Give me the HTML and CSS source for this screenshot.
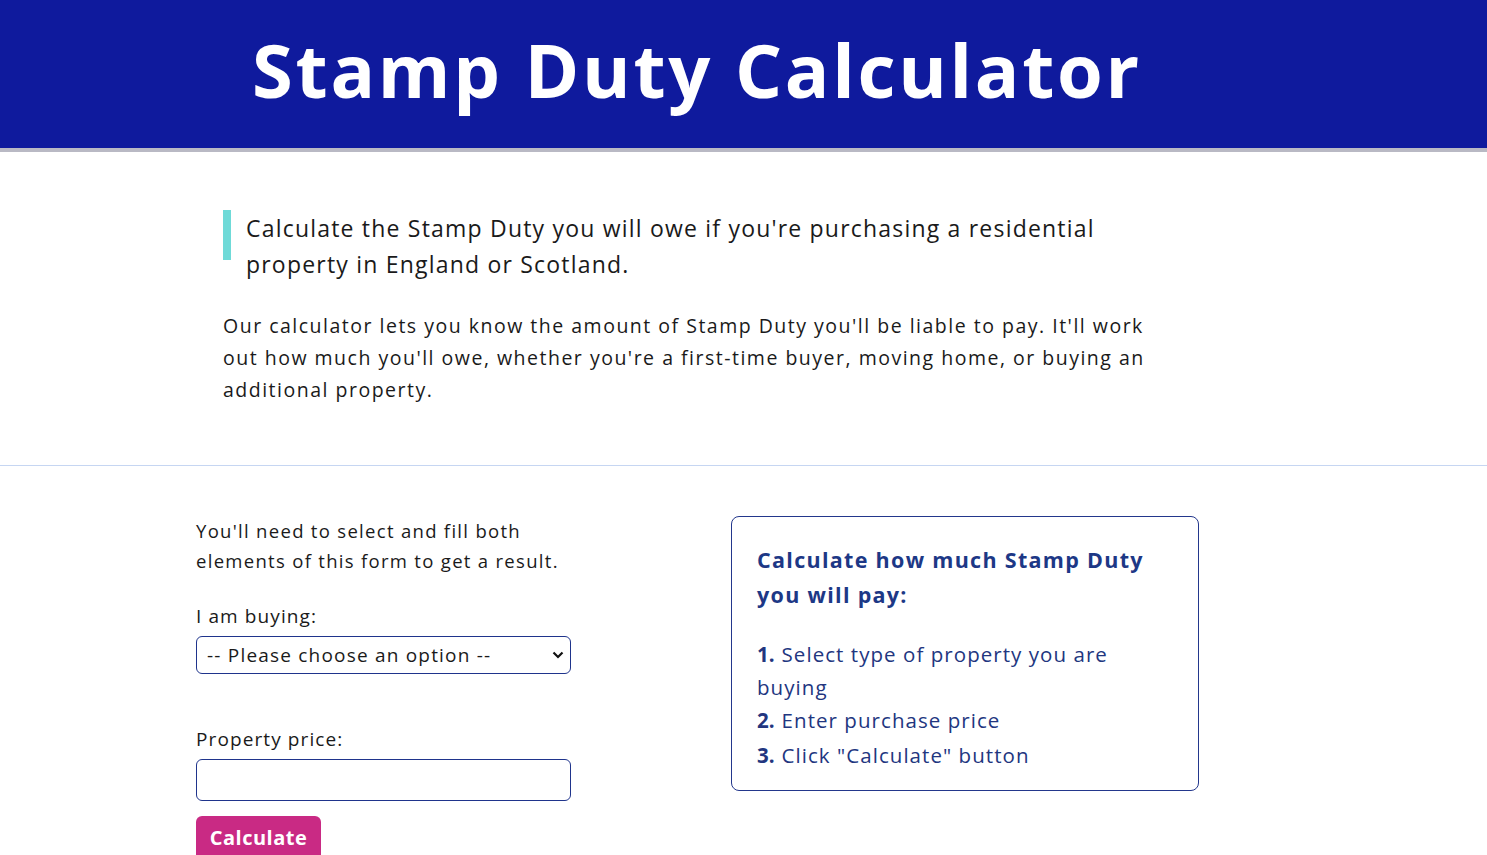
FILE: index.html
```html
<!DOCTYPE html>
<html lang="en">
<head>
<meta charset="utf-8">
<title>Stamp Duty Calculator</title>
<link rel="stylesheet" href="styles.css">
</head>
<body>
<header class="site-header">
  <div class="header-inner">
    <h1 class="title">Stamp Duty Calculator</h1>
  </div>
</header>
<section class="intro">
  <div class="intro-inner">
    <div class="lead">
      <span class="lead-bar"></span>
      <p class="lead-text">Calculate the Stamp Duty you will owe if you're purchasing a residential property in England or Scotland.</p>
    </div>
    <p class="body-text">Our calculator lets you know the amount of Stamp Duty you'll be liable to pay. It'll work out how much you'll owe, whether you're a first-time buyer, moving home, or buying an additional property.</p>
  </div>
</section>
<section class="calc">
  <form class="calc-form">
    <p class="form-note">You'll need to select and fill both elements of this form to get a result.</p>
    <label class="field-label" for="buying">I am buying:</label>
    <div class="select-wrap">
      <select id="buying" class="field select">
        <option>-- Please choose an option --</option>
      </select>
      <svg class="chev" width="12" height="8" viewBox="0 0 12 8"><path d="M1.5 1.5 L6 6 L10.5 1.5" fill="none" stroke="#111" stroke-width="2.2"/></svg>
    </div>
    <label class="field-label price-label" for="price">Property price:</label>
    <input id="price" class="field input" type="text">
    <button type="button" class="btn">Calculate</button>
  </form>
  <aside class="steps">
    <h2 class="steps-title">Calculate how much Stamp Duty you will pay:</h2>
    <ol class="steps-list">
      <li><b class="num">1.</b>Select type of property you are buying</li>
      <li><b class="num">2.</b>Enter purchase price</li>
      <li><b class="num">3.</b>Click "Calculate" button</li>
    </ol>
  </aside>
</section>
</body>
</html>
```
FILE: styles.css
```css
* { box-sizing: border-box; }
html, body { margin: 0; padding: 0; }
body {
  font-family: "Open Sans", "Noto Sans", sans-serif;
  color: #1a1a1a;
  background: #fff;
  overflow: hidden;
}
.site-header {
  background: #0f1a9d;
  height: 152px;
  border-bottom: 4px solid #b9b9c4;
}
.header-inner {
  margin-left: 223px;
  width: 948px;
  height: 148px;
  display: flex;
  align-items: center;
  justify-content: center;
}
.title {
  margin: 0;
  color: #fff;
  font-family: "Open Sans", sans-serif;
  font-weight: 700;
  font-size: 74px;
  letter-spacing: 2.7px;
  line-height: 1;
  padding-bottom: 8px;
}
.intro {
  padding: 58px 0 59px;
  border-bottom: 1px solid #c6d6f2;
}
.intro-inner {
  margin-left: 223px;
  width: 948px;
}
.lead {
  display: flex;
  align-items: flex-start;
  gap: 15px;
}
.lead-bar {
  flex: 0 0 8px;
  height: 50px;
  background: #6fdad8;
}
.lead-text {
  margin: 0;
  font-size: 23px;
  line-height: 36px;
  letter-spacing: 1.2px;
  max-width: 880px;
}
.body-text {
  margin: 28px 0 0;
  font-size: 19.5px;
  line-height: 32px;
  letter-spacing: 1.5px;
  max-width: 940px;
}
.calc {
  display: flex;
  align-items: flex-start;
  padding: 50px 0 0 196px;
  gap: 160px;
}
.calc-form {
  width: 375px;
  display: flex;
  flex-direction: column;
  align-items: flex-start;
}
.form-note {
  margin: 0;
  font-size: 18.5px;
  line-height: 30px;
  letter-spacing: 1.3px;
  width: 375px;
}
.field-label {
  display: block;
  margin-top: 25px;
  font-size: 19px;
  line-height: 30px;
  letter-spacing: 1.1px;
}
.price-label { margin-top: 50px; }
.select-wrap {
  position: relative;
  width: 375px;
  margin-top: 5px;
}
.field {
  width: 375px;
  border: 1px solid #1f348c;
  border-radius: 6px;
  background: #fff;
  font-family: inherit;
  color: #1a1a1a;
}
.select {
  display: block;
  height: 38px;
  font-size: 19px;
  letter-spacing: 1.2px;
  padding: 0 30px 0 10px;
  appearance: none;
  -webkit-appearance: none;
}
.chev {
  position: absolute;
  right: 7px;
  top: 15px;
  pointer-events: none;
}
.input {
  display: block;
  height: 42px;
  margin-top: 5px;
  font-size: 19px;
  padding: 0 10px;
}
.btn {
  margin-top: 15px;
  width: 125px;
  height: 46px;
  border: 0;
  border-radius: 6px;
  background: #c92a84;
  color: #fff;
  font-family: inherit;
  font-weight: 700;
  font-size: 20px;
  letter-spacing: 0.5px;
  padding: 0 0 4px;
}
.steps {
  width: 468px;
  height: 275px;
  border: 1px solid #23378c;
  border-radius: 8px;
  padding: 25px 40px 0 25px;
  color: #22367f;
}
.steps-title {
  margin: 0;
  font-size: 21.5px;
  font-weight: 700;
  line-height: 35px;
  letter-spacing: 1.3px;
  color: #1d3886;
}
.steps-list {
  list-style: none;
  margin: 26px 0 0;
  padding: 0;
  font-size: 20.5px;
  line-height: 33px;
  letter-spacing: 1.05px;
}
.steps-list li:last-child { margin-top: 2px; }
.num { font-weight: 700; letter-spacing: 0; margin-right: 7px; }
```
